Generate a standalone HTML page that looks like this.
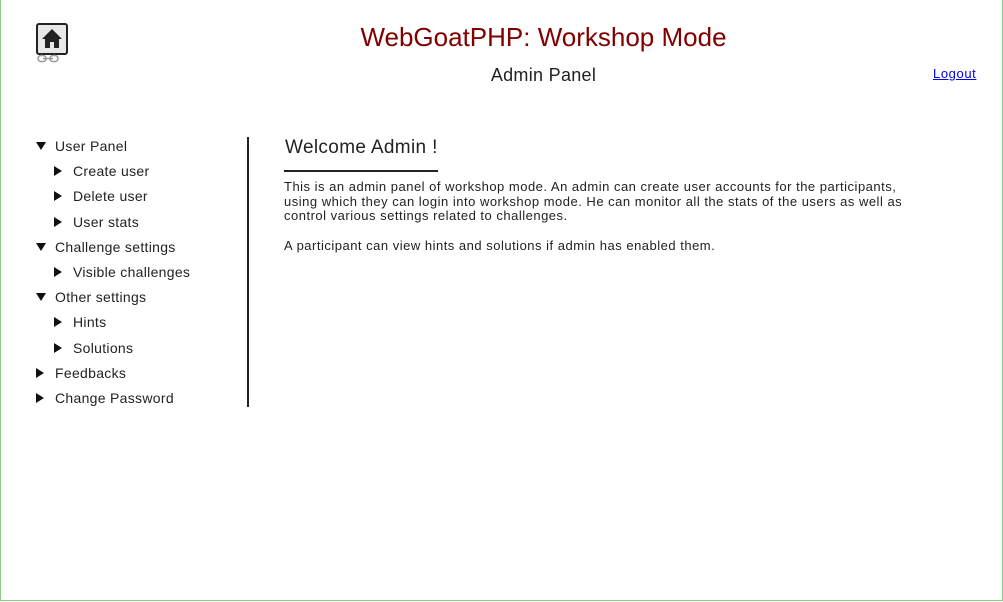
<!DOCTYPE html>
<html><head><style>
html,body{margin:0;padding:0}
body{width:1003px;height:602px;position:relative;overflow:hidden;font-family:"Liberation Sans",sans-serif;color:#222;background:#fff}
.frame{position:absolute;left:0;top:0;width:1001px;height:600px;border-left:1px solid #8c8;border-right:1px solid #8c8;border-bottom:1px solid #8c8}
.abs{position:absolute;white-space:nowrap}
.tri{position:absolute;width:0;height:0}
.down{border-left:5px solid transparent;border-right:5px solid transparent;border-top:8px solid #111}
.right{border-top:5px solid transparent;border-bottom:5px solid transparent;border-left:8px solid #111}
.nav{font-size:14px;color:#222;letter-spacing:0.3px}
p{margin:0}
</style></head><body>
<div class="frame"></div>
<div class="abs" style="left:36px;top:23px;width:28px;height:28px;border:2px solid #222;border-radius:3px;background:#e8e8e8"></div>
<svg class="abs" style="left:40px;top:27px" width="24" height="24" viewBox="0 0 24 24"><path d="M12 2 L2 12 H5 V21 H10 V15 H14 V21 H19 V12 H22 Z" fill="#222"/></svg>
<svg class="abs" style="left:37px;top:54px" width="22" height="9" viewBox="0 0 22 9"><rect x="1" y="1.5" width="8" height="6" rx="3" fill="none" stroke="#999" stroke-width="1.5"/><rect x="13" y="1.5" width="8" height="6" rx="3" fill="none" stroke="#999" stroke-width="1.5"/><line x1="6" y1="4.5" x2="16" y2="4.5" stroke="#999" stroke-width="1.5"/></svg>
<div class="abs" style="left:0;width:1087px;text-align:center;top:22px;font-size:26px;color:#800000">WebGoatPHP: Workshop Mode</div>
<div class="abs" style="left:0;width:1087px;text-align:center;top:65px;font-size:18px;color:#222;letter-spacing:0.3px">Admin Panel</div>
<div class="abs" style="left:933px;top:66px;font-size:13px;color:#00e;text-decoration:underline;letter-spacing:0.6px">Logout</div>

<div class="tri down" style="left:36px;top:142px"></div><div class="abs nav" style="left:55px;top:138px">User Panel</div>
<div class="tri right" style="left:54px;top:166px"></div><div class="abs nav" style="left:73px;top:163px">Create user</div>
<div class="tri right" style="left:54px;top:191px"></div><div class="abs nav" style="left:73px;top:188px">Delete user</div>
<div class="tri right" style="left:54px;top:217px"></div><div class="abs nav" style="left:73px;top:214px">User stats</div>
<div class="tri down" style="left:36px;top:243px"></div><div class="abs nav" style="left:55px;top:239px">Challenge settings</div>
<div class="tri right" style="left:54px;top:267px"></div><div class="abs nav" style="left:73px;top:264px">Visible challenges</div>
<div class="tri down" style="left:36px;top:293px"></div><div class="abs nav" style="left:55px;top:289px">Other settings</div>
<div class="tri right" style="left:54px;top:317px"></div><div class="abs nav" style="left:73px;top:314px">Hints</div>
<div class="tri right" style="left:54px;top:343px"></div><div class="abs nav" style="left:73px;top:340px">Solutions</div>
<div class="tri right" style="left:36px;top:368px"></div><div class="abs nav" style="left:55px;top:365px">Feedbacks</div>
<div class="tri right" style="left:36px;top:393px"></div><div class="abs nav" style="left:55px;top:390px">Change Password</div>
<div class="abs" style="left:247px;top:137px;width:2px;height:270px;background:#222"></div>

<div class="abs" style="left:285px;top:137px;font-size:19px;color:#222;letter-spacing:0.35px">Welcome Admin !</div>
<div class="abs" style="left:284px;top:170px;width:154px;height:2px;background:#222"></div>
<div class="abs" style="left:284px;top:180px;width:625px;white-space:normal;font-size:13px;line-height:14.5px;color:#222;letter-spacing:0.5px">
<p>This is an admin panel of workshop mode. An admin can create user accounts for the participants, using which they can login into workshop mode. He can monitor all the stats of the users as well as control various settings related to challenges.</p>
<p style="margin-top:15px">A participant can view hints and solutions if admin has enabled them.</p>
</div>
</body></html>
